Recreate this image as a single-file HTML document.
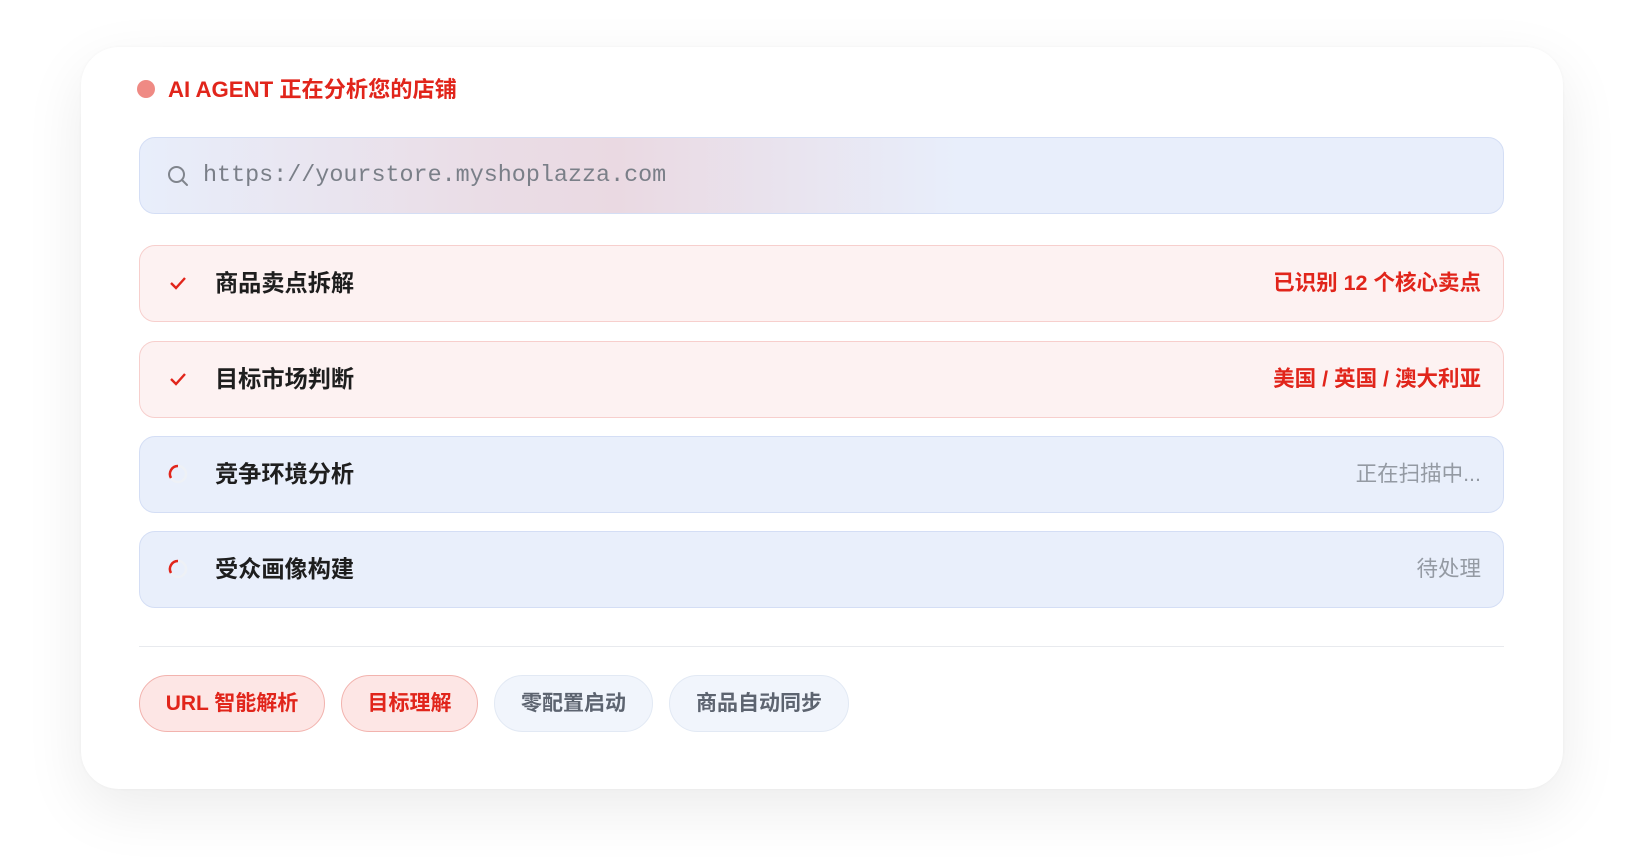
<!DOCTYPE html>
<html><head><meta charset="utf-8"><style>
*{box-sizing:border-box;margin:0;padding:0}
body{width:1652px;height:860px;background:#fff;font-family:"Liberation Sans","Noto Sans CJK SC",sans-serif;position:relative;overflow:hidden}
.card{position:absolute;left:81px;top:47px;width:1482px;height:742px;background:#fff;border-radius:38px;box-shadow:0 20px 60px rgba(0,0,0,0.08),0 0 3px rgba(0,0,0,0.04)}
.title{position:absolute;left:56px;top:26px;height:30px;display:flex;align-items:center;font-size:22.2px;font-weight:700;color:#e1251b}
.dot{width:18px;height:18px;border-radius:50%;background:#ef8a84;margin-right:13px;margin-top:2px}
.search{position:absolute;left:58px;top:90px;width:1365px;height:77px;border-radius:16px;border:1px solid #d4def5;background:linear-gradient(90deg,#e8eefb 0%,#eadde6 25%,#ead9e2 35%,#e8eefb 60%,#e8eefb 100%);display:flex;align-items:center;padding-left:27px;padding-bottom:0}
.search span{font-family:"Liberation Mono",monospace;font-size:23.4px;color:#7a7f88;margin-left:14px}
.row{position:absolute;left:58px;width:1365px;height:77px;border-radius:16px;display:flex;align-items:center;padding:0 22px 5px 28px}
.red{background:#fdf2f2;border:1px solid #f7cfcd}
.blue{background:#e9effb;border:1px solid #d4def5}
.row .ic{width:20px;height:20px;margin-right:27px;display:flex;align-items:center;justify-content:center;margin-top:3px}
.row .lbl{font-size:23.2px;font-weight:700;color:#1e1e1e}
.row .rt{margin-left:auto;font-size:21.5px;font-weight:700;color:#e1251b}
.row .rt.g{font-weight:400;color:#949aa3}
.div{position:absolute;left:58px;top:599px;width:1365px;height:1px;background:#e8eaee}
.chip{position:absolute;top:628px;height:57px;border-radius:29px;display:flex;align-items:center;justify-content:center;font-size:21px;font-weight:700;padding-bottom:4px}
.cr{background:#fde6e5;border:1px solid #f2b3ae;color:#e1251b}
.cg{background:#f1f5fc;border:1px solid #e2e9f4;color:#5d6470}
</style></head><body>
<div class="card">
 <div class="title"><div class="dot"></div>AI AGENT 正在分析您的店铺</div>
 <div class="search"><svg width="22" height="22" viewBox="0 0 22 22"><circle cx="9.5" cy="9.5" r="7.5" fill="none" stroke="#80858d" stroke-width="2"/><path d="M15 15l5 5" stroke="#80858d" stroke-width="2" stroke-linecap="round"/></svg><span>https://yourstore.myshoplazza.com</span></div>
 <div class="row red" style="top:198px"><div class="ic"><svg width="18" height="14" viewBox="0 0 18 14"><path d="M2 7l5 5 9-10" fill="none" stroke="#e1251b" stroke-width="2.4"/></svg></div><div class="lbl">商品卖点拆解</div><div class="rt">已识别 12 个核心卖点</div></div>
 <div class="row red" style="top:294px"><div class="ic"><svg width="18" height="14" viewBox="0 0 18 14"><path d="M2 7l5 5 9-10" fill="none" stroke="#e1251b" stroke-width="2.4"/></svg></div><div class="lbl">目标市场判断</div><div class="rt">美国 / 英国 / 澳大利亚</div></div>
 <div class="row blue" style="top:389px"><div class="ic"><svg width="20" height="20" viewBox="0 0 20 20"><circle cx="10" cy="10" r="8" fill="none" stroke="#eef1f6" stroke-width="2.5"/><path d="M10 2A8 8 0 0 0 3 14" fill="none" stroke="#e1251b" stroke-width="2.5"/></svg></div><div class="lbl">竞争环境分析</div><div class="rt g">正在扫描中...</div></div>
 <div class="row blue" style="top:484px"><div class="ic"><svg width="20" height="20" viewBox="0 0 20 20"><circle cx="10" cy="10" r="8" fill="none" stroke="#eef1f6" stroke-width="2.5"/><path d="M10 2A8 8 0 0 0 3 14" fill="none" stroke="#e1251b" stroke-width="2.5"/></svg></div><div class="lbl">受众画像构建</div><div class="rt g">待处理</div></div>
 <div class="div"></div>
 <div class="chip cr" style="left:58px;width:186px">URL 智能解析</div>
 <div class="chip cr" style="left:260px;width:137px">目标理解</div>
 <div class="chip cg" style="left:413px;width:159px">零配置启动</div>
 <div class="chip cg" style="left:588px;width:180px">商品自动同步</div>
</div>
</body></html>
